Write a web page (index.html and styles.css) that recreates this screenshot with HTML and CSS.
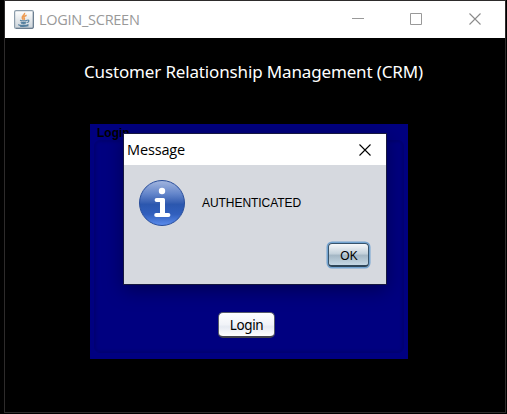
FILE: index.html
```html
<!DOCTYPE html>
<html lang="en">
<head>
<meta charset="utf-8">
<title>LOGIN_SCREEN</title>
<link rel="stylesheet" href="styles.css">
</head>
<body>
<main class="window">
  <header class="titlebar">
    <svg class="java" width="20" height="19" viewBox="0 0 20 19">
      <defs><linearGradient id="tile" x2="0" y2="1"><stop stop-color="#fff"/><stop offset="1" stop-color="#cbd3d9"/></linearGradient></defs>
      <rect x=".6" y=".6" width="18.8" height="17.8" rx="1.5" fill="url(#tile)" stroke="#8c9dab" stroke-width="1.2"/>
      <path d="M19.3 2v15q0 1-1 1.3H2" fill="none" stroke="#65798b"/>
      <path d="M10.5 2.8c1 2-3.3 3.2-2.2 5.4.3.9 1.2 1.4 1.2 1.4M12.6 5.2C9.8 6.3 9.4 7 10.3 8.3c.4.7.1 1-.3 1.5" fill="none" stroke="#ed9a51" stroke-width="1.5"/>
      <path d="M6 10.2q3.4 1.3 7.2 0M6.6 12q2.9 1.1 5.8 0M7.2 13.5q2.4.8 4.5 0M13.3 10.2c2.4-.5 1.9 2-.4 2.3M4.8 14.5c-1.5.9 7.5 1.7 9.7 0M6 16.3q4.8.6 8.5-.5" fill="none" stroke="#557f9e" stroke-width="1.15"/>
    </svg>
    <h1 class="window-title">LOGIN_SCREEN</h1>
    <div class="controls">
      <svg width="13" height="13"><path d="M0 5.5h12" stroke="#999"/></svg>
      <svg width="13" height="13"><path d="M.5.5h11v11H.5z" fill="none" stroke="#999"/></svg>
      <svg width="13" height="13"><path d="M.5.5l11 11m0-11l-11 11" stroke="#8b8b8b" stroke-width="1.1"/></svg>
    </div>
  </header>
  <section class="content">
    <h2 class="heading">Customer Relationship Management (CRM)</h2>
    <div class="panel">
      <div class="panel-title">Login</div>
      <div class="group"><button class="login">Login</button></div>
    </div>
  </section>
  <div class="dialog" role="dialog">
    <div class="dialog-bar"><span class="dialog-title">Message</span>
      <svg width="12" height="12"><path d="M.5.5l11 11m0-11l-11 11" stroke="#000" stroke-width="1.1"/></svg>
    </div>
    <div class="dialog-body">
      <div class="message">
        <svg width="48" height="48" viewBox="0 0 48 48">
          <defs><linearGradient id="info" x2="0" y2="1"><stop stop-color="#a3b6df"/><stop offset=".3" stop-color="#6385ca"/><stop offset=".48" stop-color="#3a62b4"/><stop offset=".53" stop-color="#2b57ae"/><stop offset=".75" stop-color="#315fbd"/><stop offset="1" stop-color="#5c8ded"/></linearGradient></defs>
          <circle cx="24" cy="24" r="22.5" fill="url(#info)" stroke="#294e9b"/>
          <g fill="#fff"><circle cx="24" cy="12" r="3.2"/><path d="M18.6 19h6.9q1.5 0 1.5 1.5V34h3.4a2 2 0 0 1 0 4H18.2a2 2 0 0 1 0-4H22V23h-3.4a2 2 0 0 1 0-4z"/></g>
        </svg>
        <span class="message-text">AUTHENTICATED</span>
      </div>
      <button class="ok">OK</button>
    </div>
  </div>
</main>
</body>
</html>
```
FILE: styles.css
```css
* { box-sizing: border-box; }
body { margin: 0; width: 507px; height: 414px; background: #000; overflow: hidden; }
.window { position: relative; margin-left: 4px; width: 502px; height: 413px; border: 1px solid #2d2b2b; background: #000; }
.titlebar { display: flex; align-items: center; height: 37px; padding: 0 24px 0 9px; background: #fff; }
.java { flex: none; }
.window-title { margin: 0 0 0 5px; font: 400 14.5px/36px "Open Sans", sans-serif; letter-spacing: -.27px; color: #999; }
.controls { display: flex; gap: 46px; margin-left: auto; margin-top: -1px; }
.controls svg { display: block; width: 12.5px; overflow: visible; }
.content { display: flex; flex-direction: column; align-items: center; }
.heading { margin: 22px 0 0; width: 342px; font: 400 17px/24px "Noto Sans", sans-serif; letter-spacing: -.15px; white-space: nowrap; color: #fff; }
.panel { width: 318px; height: 235px; margin: 40px 12px 0 0; background: #000080; padding: 2px 4px 6px; }
.panel-title { height: 14px; padding-left: 3px; font: 700 12px/14px "Liberation Sans", sans-serif; color: #000; }
.group { display: flex; align-items: flex-end; justify-content: center; height: 213px; padding-bottom: 14px; border: 1px solid #000073; border-radius: 6px; box-shadow: inset 0 0 3px 1px #000070; }
.login { width: 57px; height: 26px; padding: 0 0 0 1px; margin-right: 6px; border: 1px solid #565a69; border-bottom: 2px solid #41424b; border-radius: 5px; background: linear-gradient(#fff, #f1f3f8 50%, #e6eaf2 60%, #fff); font: 13.5px/22px "Noto Sans", sans-serif; letter-spacing: -.4px; color: #000; }
.dialog { position: absolute; left: 118px; top: 132px; width: 264px; height: 152px; border: 1px solid #17183f; background: #d6d9df; box-shadow: 0 5px 18px rgba(0, 0, 0, .35); }
.dialog-bar { display: flex; align-items: center; justify-content: space-between; height: 31px; padding: 0 15px 0 3px; background: #fff; }
.dialog-title { font: 14.5px/31px "Open Sans", sans-serif; letter-spacing: -.15px; color: #000; }
.dialog-body { display: flex; flex-direction: column; padding: 14px 16px 0 14px; }
.message { display: flex; align-items: center; height: 48px; }
.message svg { flex: none; }
.message-text { margin-left: 16px; font: 12px/16px "Liberation Sans", sans-serif; letter-spacing: -.05px; color: #000; }
.ok { align-self: flex-end; width: 41px; height: 24px; margin: 16px 1px 0 0; padding: 2px 0 0 1px; border: 1px solid #36536c; border-bottom: 2px solid #2e4659; border-radius: 4px; background: linear-gradient(#f6f8fa, #c5d2dc 45%, #a4b7c5 55%, #c5d8e5); box-shadow: 0 0 0 1.5px #73a4d1; font: 12px/20px "Liberation Sans", sans-serif; color: #000; }
```
